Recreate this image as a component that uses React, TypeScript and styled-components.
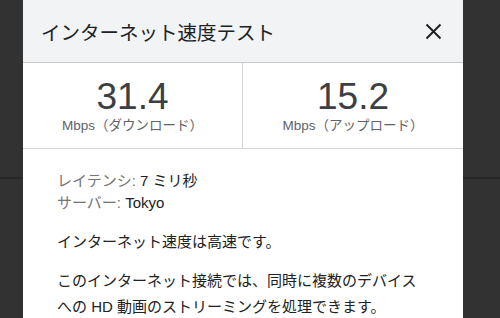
import styled, { createGlobalStyle } from "styled-components";

const GlobalStyle = createGlobalStyle`
    html, body {
        margin: 0;
        padding: 0;
        height: 100%;
        overflow: hidden;
    }
    body {
        background-color: #323232;
        background-image: linear-gradient(to bottom, transparent 177px, #262626 177px, #262626 179px, transparent 179px);
        font-family: "Liberation Sans", "Noto Sans CJK JP", sans-serif;
    }
`;

const Page = styled.div`
    width: 500px;
    height: 318px;
    overflow: hidden;
    padding-left: 23px;
    box-sizing: border-box;
`;

const Dialog = styled.div`
    width: 440px;
    height: 340px;
    background-color: #ffffff;
    display: flex;
    flex-direction: column;
`;

const Header = styled.div`
    height: 62px;
    background-color: #f1f3f4;
    border-bottom: 1px solid #c8c8c8;
    display: flex;
    align-items: center;
    justify-content: space-between;
    padding: 0 20px 0 18px;
    box-sizing: content-box;

    h1 {
        margin: 0;
        font-size: 19.5px;
        font-weight: 400;
        color: #202124;
    }
`;

const CloseButton = styled.button`
    border: none;
    background: none;
    padding: 0;
    width: 20px;
    height: 20px;
    display: flex;
    align-items: center;
    justify-content: center;
    cursor: pointer;
`;

const Stats = styled.div`
    display: grid;
    grid-template-columns: 1fr 1fr;
    height: 85px;
    border-bottom: 1px solid #d6d6d6;
`;

const Stat = styled.div<{ $divider?: boolean }>`
    display: flex;
    flex-direction: column;
    align-items: center;
    padding-top: 14px;
    border-right: ${(props) => (props.$divider ? "1px solid #d6d6d6" : "none")};

    .num {
        font-size: 37px;
        line-height: 40px;
        color: #3c4043;
    }
    .unit {
        font-size: 13.5px;
        line-height: 18px;
        color: #5f6368;
        margin-top: 0;
    }
`;

const Body = styled.div`
    padding: 21px 34px 0;
    font-size: 15px;
    color: #202124;
`;

const Meta = styled.div`
    line-height: 22px;
    margin-bottom: 15px;

    .label {
        color: #757575;
    }
`;

const Para = styled.p`
    margin: 0 0 13px;
    line-height: 26px;
`;

const App = () => {
    return (
        <Page>
            <GlobalStyle />
            <Dialog>
                <Header>
                    <h1>インターネット速度テスト</h1>
                    <CloseButton aria-label="閉じる">
                        <svg width="17" height="17" viewBox="0 0 17 17">
                            <path d="M1.5 1.5 L15.5 15.5 M15.5 1.5 L1.5 15.5" stroke="#202124" strokeWidth="2" />
                        </svg>
                    </CloseButton>
                </Header>
                <Stats>
                    <Stat $divider>
                        <span className="num">31.4</span>
                        <span className="unit">Mbps（ダウンロード）</span>
                    </Stat>
                    <Stat>
                        <span className="num">15.2</span>
                        <span className="unit">Mbps（アップロード）</span>
                    </Stat>
                </Stats>
                <Body>
                    <Meta>
                        <div>
                            <span className="label">レイテンシ:</span> 7 ミリ秒
                        </div>
                        <div>
                            <span className="label">サーバー:</span> Tokyo
                        </div>
                    </Meta>
                    <Para>インターネット速度は高速です。</Para>
                    <Para>
                        このインターネット接続では、同時に複数のデバイス
                        <br />
                        への HD 動画のストリーミングを処理できます。
                    </Para>
                </Body>
            </Dialog>
        </Page>
    );
};

export default App;
